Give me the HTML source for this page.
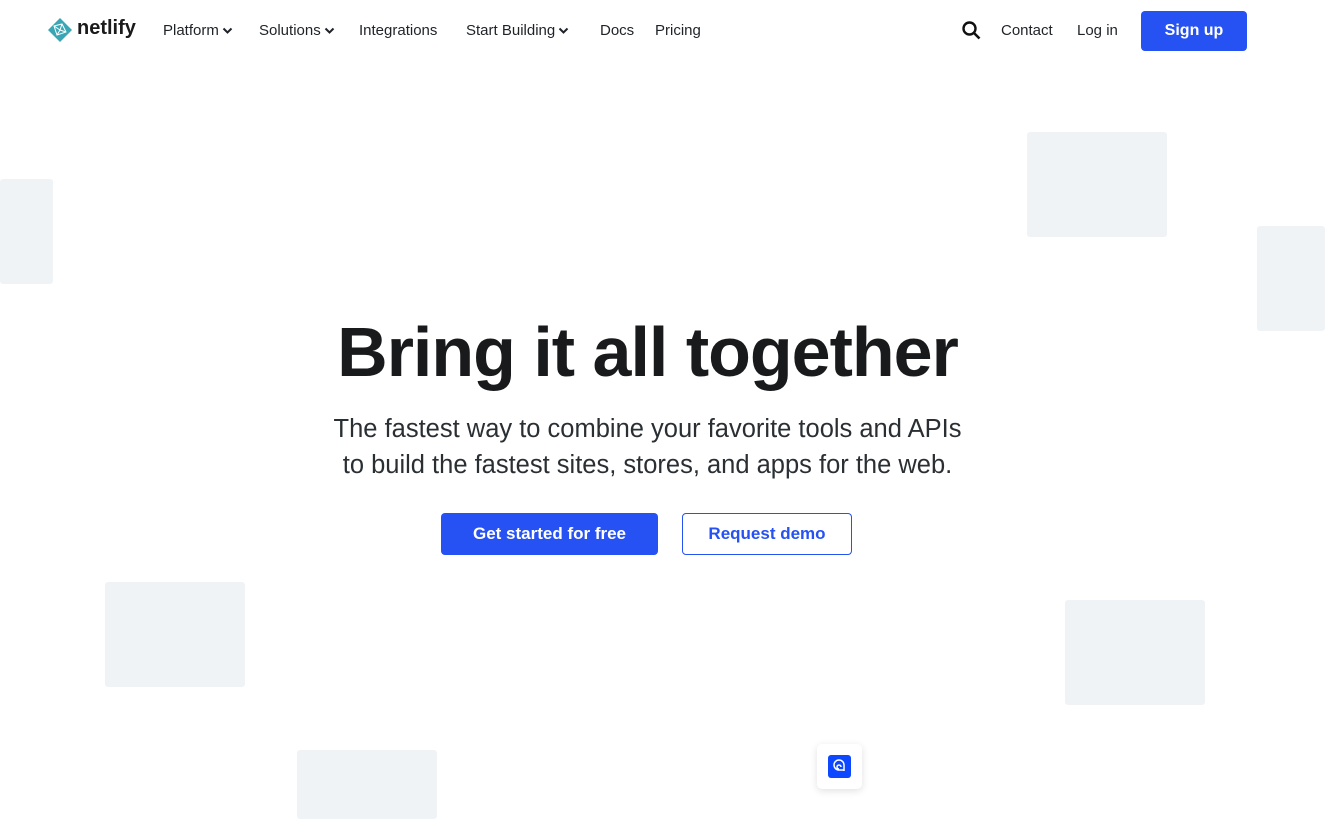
<!DOCTYPE html>
<html><head><style>
*{margin:0;padding:0;box-sizing:border-box}
body{width:1325px;height:819px;overflow:hidden;background:#fff;font-family:"Liberation Sans",sans-serif;color:#0e1e25;position:relative}
.nav a{position:absolute;top:22px;font-size:15px;color:#1f2328;text-decoration:none;display:flex;align-items:center;white-space:nowrap}
.nav svg{margin-left:3px}
.box{position:absolute;background:#f0f3f6;border-radius:3px}
h1{position:absolute;top:312px;left:0;width:1295px;text-align:center;font-size:70px;font-weight:bold;color:#181a1c;letter-spacing:-1px}
.sub{position:absolute;top:411px;left:0;width:1295px;text-align:center;font-size:25.5px;line-height:36px;color:#2a2f33}
.btn{position:absolute;top:513px;height:42px;border-radius:4px;font-size:17px;font-weight:bold;display:flex;align-items:center;justify-content:center}
</style></head><body>
<svg style="position:absolute;left:48px;top:18px" width="24" height="24" viewBox="0 0 24 24"><path d="M12 0L24 12L12 24L0 12Z" fill="#3aa6b4"/><path d="M6 8L14 6L18 14L9 17ZM14 6L12 12L18 14M12 12L9 17M6 8L12 12" stroke="#fff" stroke-width="1" fill="none"/></svg>
<div style="position:absolute;left:77px;top:17px;font-size:20px;font-weight:bold;color:#1a1a1a">netlify</div>
<div class="nav">
<a style="left:163px">Platform<svg width="11" height="8" viewBox="0 0 11 8"><path d="M1.5 1.5L5.5 5.5L9.5 1.5" stroke="#1f2328" stroke-width="2" fill="none"/></svg></a>
<a style="left:259px">Solutions<svg width="11" height="8" viewBox="0 0 11 8"><path d="M1.5 1.5L5.5 5.5L9.5 1.5" stroke="#1f2328" stroke-width="2" fill="none"/></svg></a>
<a style="left:359px">Integrations</a>
<a style="left:466px">Start Building<svg width="11" height="8" viewBox="0 0 11 8"><path d="M1.5 1.5L5.5 5.5L9.5 1.5" stroke="#1f2328" stroke-width="2" fill="none"/></svg></a>
<a style="left:600px">Docs</a>
<a style="left:655px">Pricing</a>
<a style="left:1001px">Contact</a>
<a style="left:1077px">Log in</a>
</div>
<svg style="position:absolute;left:962px;top:21px" width="19" height="19" viewBox="0 0 19 19"><circle cx="7.5" cy="7.5" r="6" stroke="#111" stroke-width="2.4" fill="none"/><path d="M12 12L17.5 17.5" stroke="#111" stroke-width="2.6"/></svg>
<div class="btn" style="left:1141px;top:11px;width:106px;height:40px;background:#2651f3;color:#fff;font-size:16px">Sign up</div>
<div class="box" style="left:1027px;top:132px;width:140px;height:105px"></div>
<div class="box" style="left:0;top:179px;width:53px;height:105px"></div>
<div class="box" style="left:1257px;top:226px;width:68px;height:105px"></div>
<div class="box" style="left:105px;top:582px;width:140px;height:105px"></div>
<div class="box" style="left:1065px;top:600px;width:140px;height:105px"></div>
<div class="box" style="left:297px;top:750px;width:140px;height:69px"></div>
<h1>Bring it all together</h1>
<div class="sub">The fastest way to combine your favorite tools and APIs<br>to build the fastest sites, stores, and apps for the web.</div>
<div class="btn" style="left:441px;width:217px;background:#2651f3;color:#fff">Get started for free</div>
<div class="btn" style="left:682px;width:170px;border:1px solid #2651f3;color:#2651f3;background:#fff">Request demo</div>
<div style="position:absolute;left:817px;top:744px;width:45px;height:45px;background:#fff;border-radius:5px;box-shadow:0 2px 8px rgba(0,0,0,.12)"><div style="position:absolute;left:11px;top:11px;width:23px;height:23px;background:#0d47ff;border-radius:3px"><svg width="23" height="23" viewBox="0 0 23 23"><path d="M16 16V10a5 5 0 1 0-5 5h5M13 12a2 2 0 1 0-2 2" stroke="#fff" stroke-width="1.5" fill="none"/></svg></div></div>
</body></html>
